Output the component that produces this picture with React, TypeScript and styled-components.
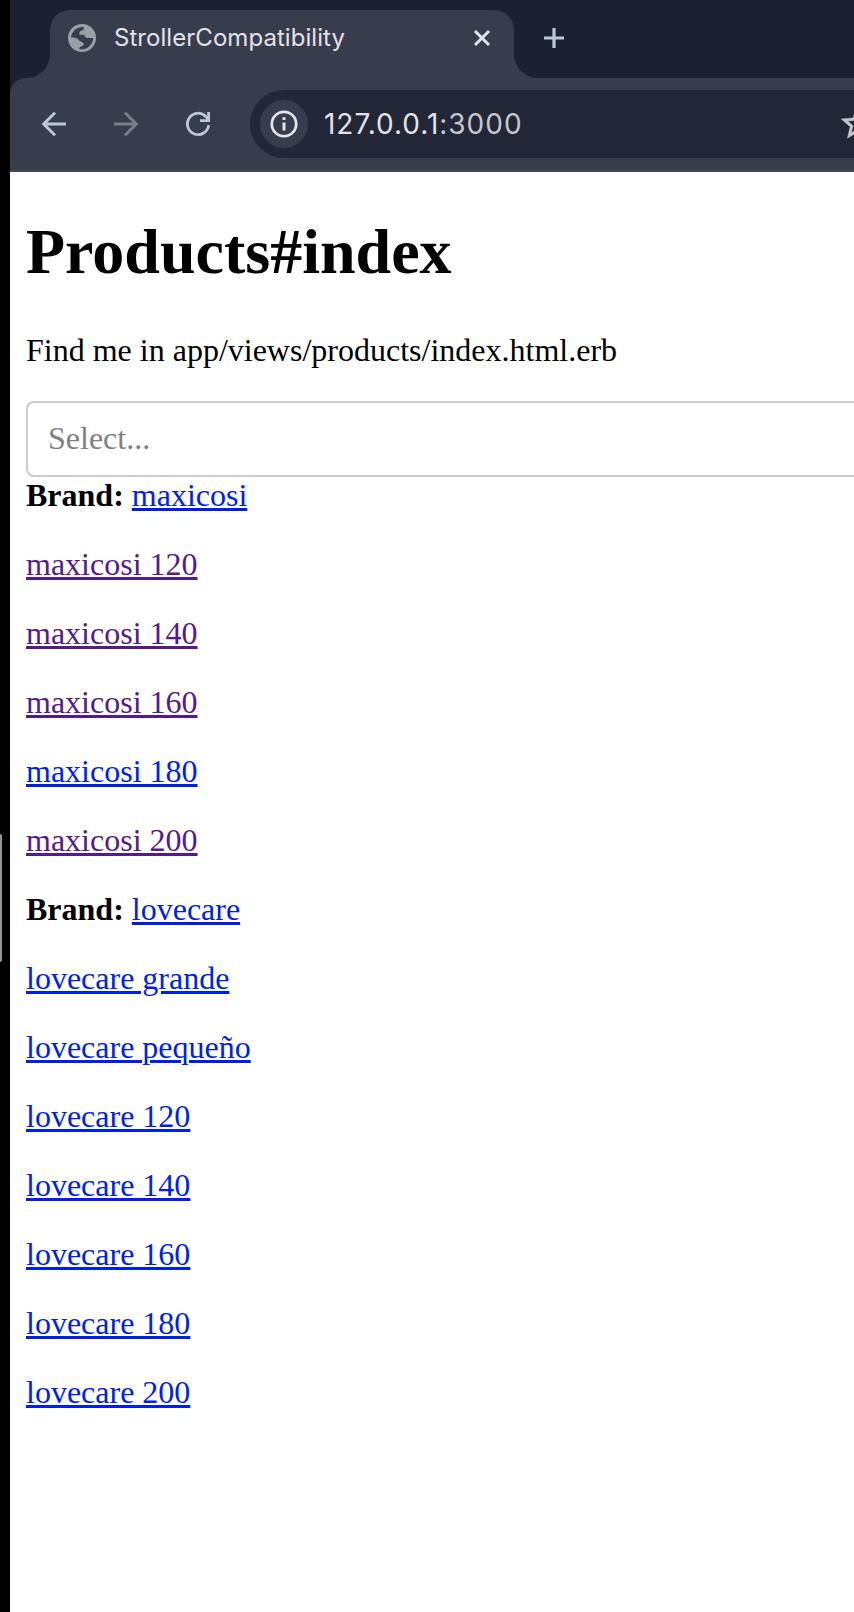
import React from "react";
import styled, { createGlobalStyle } from "styled-components";

const Global = createGlobalStyle`
  * { box-sizing: border-box; }
  html, body { margin: 0; padding: 0; background: #fff; overflow: hidden; }
`;

const Screen = styled.div`
  display: flex;
  width: 854px;
  height: 1612px;
  overflow: hidden;
`;

const DesktopEdge = styled.div`
  flex: none;
  width: 10px;
  padding-top: 834px;
  background: #000;
`;

const BackWindow = styled.div`
  width: 2px;
  height: 128px;
  background: #969696;
  border-radius: 0 2px 2px 0;
`;

const Browser = styled.div`
  flex: 1;
  min-width: 0;
  background: #fff;
  font-family: Inter, "Liberation Sans", sans-serif;
`;

const TabStrip = styled.div`
  display: flex;
  align-items: flex-end;
  height: 78px;
  background: #1b2130;
`;

const Flare = styled.div<{ $side: "left" | "right" }>`
  flex: none;
  width: 24px;
  height: 24px;
  margin-left: ${(p) => (p.$side === "left" ? "16px" : "0")};
  background: radial-gradient(
    circle at ${(p) => (p.$side === "left" ? "0 0" : "100% 0")},
    #1b2130 23.5px,
    #373d4c 24.5px
  );
`;

const Tab = styled.div`
  display: flex;
  align-items: center;
  width: 464px;
  height: 68px;
  padding: 0 22px 12px 18px;
  background: #373d4c;
  border-radius: 20px 20px 0 0;
`;

const TabTitle = styled.span`
  flex: 1;
  margin-left: 18px;
  color: #e3e2e9;
  font-size: 24px;
  line-height: 30px;
  letter-spacing: 0.05px;
  white-space: nowrap;
`;

const NewTab = styled.div`
  display: flex;
  align-self: flex-start;
  margin: 26px 0 0 4px;
`;

const ToolbarBack = styled.div`
  background: #1b2130;
`;

const Toolbar = styled.div`
  display: flex;
  align-items: center;
  height: 94px;
  padding-left: 31px;
  background: #373d4c;
  border-bottom: 2px solid #45484f;
  border-top-left-radius: 16px;
`;

const NavButton = styled.div`
  display: flex;
  align-items: center;
  justify-content: center;
  flex: none;
  width: 28px;
  height: 28px;
  margin-right: 44px;
`;

const AddressBar = styled.div`
  display: flex;
  align-items: center;
  flex: 1;
  height: 68px;
  margin-left: -7px;
  padding-left: 10px;
  background: #212736;
  border-radius: 34px 0 0 34px;
  overflow: hidden;
`;

const InfoChip = styled.div`
  display: flex;
  align-items: center;
  justify-content: center;
  width: 48px;
  height: 48px;
  background: #373d4c;
  border-radius: 50%;
`;

const Address = styled.span`
  flex: 1;
  margin-left: 16px;
  color: #e3e3e8;
  font-size: 28px;
  line-height: 36px;
  letter-spacing: 0.98px;
`;

const Port = styled.span`
  color: #c6c6ce;
`;

const StarClip = styled.div`
  display: flex;
  width: 16px;
  height: 40px;
  overflow: hidden;
`;

const StarIcon = styled.svg`
  flex: none;
  width: 39px;
  height: 39px;
`;

const Page = styled.main`
  padding: 43px 0 0 16px;
  color: #000;
  font-family: "Liberation Serif", "Times New Roman", serif;
  font-size: 32px;
  line-height: 37px;
`;

const Heading = styled.h1`
  margin: 0 0 43px;
  font-size: 64px;
  line-height: 74px;
`;

const Intro = styled.p`
  margin: 0 0 32px;
`;

const Select = styled.div`
  display: flex;
  align-items: center;
  width: 1200px;
  height: 76px;
  padding: 0 20px 2px;
  border: 2px solid #ccc;
  border-radius: 8px;
  color: #808080;
`;

const Row = styled.div`
  margin-bottom: 32px;
`;

const ProductLink = styled.a<{ $visited?: boolean }>`
  color: ${(p) => (p.$visited ? "#551a8b" : "#001eee")};
  text-decoration: underline;
  text-decoration-thickness: 3px;
  text-underline-offset: 2px;
`;

type Product = { name: string; visited?: boolean };

const brands: { name: string; products: Product[] }[] = [
  {
    name: "maxicosi",
    products: [
      { name: "maxicosi 120", visited: true },
      { name: "maxicosi 140", visited: true },
      { name: "maxicosi 160", visited: true },
      { name: "maxicosi 180" },
      { name: "maxicosi 200", visited: true },
    ],
  },
  {
    name: "lovecare",
    products: [
      { name: "lovecare grande" },
      { name: "lovecare pequeño" },
      { name: "lovecare 120" },
      { name: "lovecare 140" },
      { name: "lovecare 160" },
      { name: "lovecare 180" },
      { name: "lovecare 200" },
    ],
  },
];

const Globe = () => (
  <svg width="28" height="28" viewBox="0 0 28 28">
    <circle cx="14" cy="14" r="14" fill="#9b9fa6" />
    <path
      d="M3 13.6C3.3 8 8 3.2 14.6 2.9C16 3 16.4 4.3 15.6 5.4C14.6 6.7 11.5 6.4 11.4 8.6V10.8H16.4C16.8 14 19 14 21 14H25.1C25 19.6 21 24.2 15.6 25.2H11.4C11 23.5 12 22.6 13.6 22.2C15.8 21.6 15.8 20.6 15.6 19.4C15 17.6 12 17.8 11 16.4C9.4 14.4 8 13.6 3 13.6Z"
      fill="#373d4c"
    />
  </svg>
);

const Arrow = ({ color, flip }: { color: string; flip?: boolean }) => (
  <svg width="28" height="28" viewBox="0 0 28 28">
    <path
      d={flip ? "M1 14H23M12 2.7L23.3 14L12 25.3" : "M25 14H3M14 2.7L2.7 14L14 25.3"}
      fill="none"
      stroke={color}
      strokeWidth="3"
    />
  </svg>
);

const Reload = () => (
  <svg width="28" height="28" viewBox="0 0 28 28">
    <path
      d="M23.7 15.2A10.7 10.7 0 1 1 20.7 6.4L23.2 9"
      fill="none"
      stroke="#bdc6dc"
      strokeWidth="2.8"
    />
    <path d="M23.6 2V10.6H15" fill="none" stroke="#bdc6dc" strokeWidth="2.8" />
  </svg>
);

export default function App() {
  return (
    <>
      <Global />
      <Screen>
        <DesktopEdge>
          <BackWindow />
        </DesktopEdge>
        <Browser>
          <TabStrip>
            <Flare $side="left" />
            <Tab>
              <Globe />
              <TabTitle>StrollerCompatibility</TabTitle>
              <svg width="20" height="20" viewBox="0 0 20 20">
                <path d="M3 3L17 17M17 3L3 17" stroke="#e3e2e9" strokeWidth="3" />
              </svg>
            </Tab>
            <Flare $side="right" />
            <NewTab>
              <svg width="24" height="24" viewBox="0 0 24 24">
                <path d="M12 2V22M2 12H22" stroke="#bdc6dc" strokeWidth="3.2" />
              </svg>
            </NewTab>
          </TabStrip>
          <ToolbarBack>
            <Toolbar>
              <NavButton>
                <Arrow color="#bdc6dc" />
              </NavButton>
              <NavButton>
                <Arrow color="#7b7e89" flip />
              </NavButton>
              <NavButton>
                <Reload />
              </NavButton>
              <AddressBar>
                <InfoChip>
                  <svg width="28" height="28" viewBox="0 0 28 28">
                    <circle cx="14" cy="14" r="12.2" fill="none" stroke="#e3e3e8" strokeWidth="2.8" />
                    <path d="M14 12.5V20.5M14 7.3V10" stroke="#e3e3e8" strokeWidth="3" />
                  </svg>
                </InfoChip>
                <Address>
                  127.0.0.1<Port>:3000</Port>
                </Address>
                <StarClip>
                  <StarIcon viewBox="0 0 24 24">
                    <path
                      d="M22 9.24l-7.19-.62L12 2 9.19 8.63 2 9.24l5.46 4.73L5.82 21 12 17.27 18.18 21l-1.63-7.03L22 9.24zM12 15.4l-3.76 2.27 1-4.28-3.32-2.88 4.38-.38L12 6.1l1.71 4.04 4.38.38-3.32 2.88 1 4.28L12 15.4z"
                      fill="#c6c6ce"
                      stroke="#c6c6ce"
                      strokeWidth="0.3"
                    />
                  </StarIcon>
                </StarClip>
              </AddressBar>
            </Toolbar>
          </ToolbarBack>
          <Page>
            <Heading>Products#index</Heading>
            <Intro>Find me in app/views/products/index.html.erb</Intro>
            <Select>Select...</Select>
            {brands.map((brand) => (
              <React.Fragment key={brand.name}>
                <Row>
                  <strong>Brand:</strong> <ProductLink>{brand.name}</ProductLink>
                </Row>
                {brand.products.map((product) => (
                  <Row key={product.name}>
                    <ProductLink $visited={product.visited}>{product.name}</ProductLink>
                  </Row>
                ))}
              </React.Fragment>
            ))}
          </Page>
        </Browser>
      </Screen>
    </>
  );
}
